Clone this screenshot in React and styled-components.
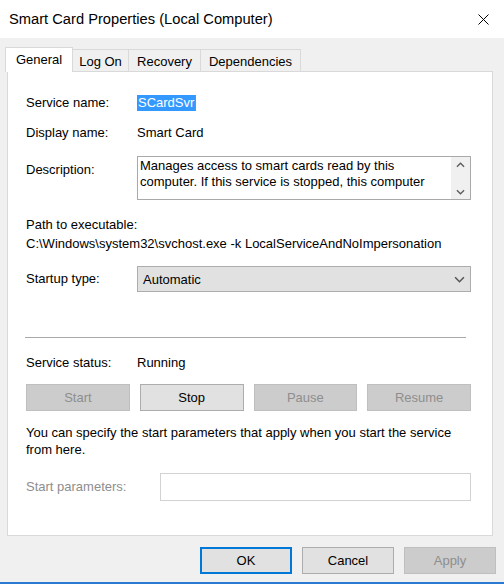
import React from "react"
import styled, { createGlobalStyle } from "styled-components"

const GlobalStyle = createGlobalStyle`
  html, body {
    margin: 0;
    padding: 0;
    background: #f0f0f0;
  }
  body {
    font-family: "Liberation Sans", Arial, sans-serif;
    font-size: 13px;
    color: #000;
  }
`

const Window = styled.div`
  width: 504px;
  height: 584px;
  box-sizing: border-box;
  display: flex;
  flex-direction: column;
  background: #f0f0f0;
  border-bottom: 2px solid #2a7ad2;
  overflow: hidden;
`

const TitleBar = styled.header`
  height: 38px;
  flex: none;
  display: flex;
  align-items: center;
  justify-content: space-between;
  background: #fff;
  padding-left: 9px;
`

const Title = styled.h1`
  margin: 0;
  font-size: 14.7px;
  font-weight: normal;
  line-height: 20px;
`

const CloseButton = styled.div`
  width: 42px;
  height: 38px;
  display: flex;
  align-items: center;
  justify-content: center;
`

const Body = styled.main`
  flex: 1;
  display: flex;
  flex-direction: column;
  padding: 9px 11px 0 7px;
`

const TabStrip = styled.nav`
  height: 24px;
  display: flex;
  align-items: flex-end;
  margin-left: -2px;
  position: relative;
  z-index: 1;
`

const Tab = styled.div`
  box-sizing: border-box;
  width: ${p => p.$width}px;
  height: ${p => (p.$active ? 25 : 22)}px;
  margin-bottom: ${p => (p.$active ? -1 : 0)}px;
  margin-left: ${p => (p.$first ? 0 : -1)}px;
  padding-top: 3px;
  border: 1px solid #d9d9d9;
  border-bottom: none;
  background: ${p => (p.$active ? "#fff" : "#f0f0f0")};
  position: relative;
  z-index: ${p => (p.$active ? 2 : 1)};
  text-align: center;
  line-height: 17px;
`

const Panel = styled.section`
  box-sizing: border-box;
  height: 465px;
  background: #fff;
  border: 1px solid #d9d9d9;
  padding: 22px 21px 0 18px;
  display: flex;
  flex-direction: column;
`

const Row = styled.div`
  display: flex;
  align-items: ${p => p.$align || "center"};
  margin-top: ${p => p.$top || 0}px;
`

const Label = styled.div`
  width: ${p => p.$width || 111}px;
  flex: none;
  line-height: 18px;
  padding-top: ${p => p.$pad || 0}px;
  color: ${p => (p.$disabled ? "#8e8e8e" : "#000")};
`

const Value = styled.div`
  line-height: 18px;
`

const Selected = styled.span`
  display: inline-block;
  line-height: 16px;
  padding: 0 1px;
  background: #3399ff;
  color: #fff;
  border-right: 1px solid #e07b00;
`

const TextBox = styled.div`
  box-sizing: border-box;
  width: 334px;
  height: 44px;
  border: 1px solid #a9a9a9;
  display: flex;
`

const TextLines = styled.div`
  flex: 1;
  padding: 1px 2px;
  line-height: 16px;
  white-space: nowrap;
`

const ScrollBar = styled.div`
  width: 19px;
  background: #f0f0f0;
  display: flex;
  flex-direction: column;
  justify-content: space-between;
  align-items: center;
  padding: 5px 0 4px;
`

const TextLine = styled.div``

const Plain = styled.div`
  line-height: 19px;
  white-space: nowrap;
  margin-top: ${p => p.$top || 0}px;
`

const Dropdown = styled.div`
  box-sizing: border-box;
  width: 335px;
  height: 26px;
  border: 1px solid #adadad;
  background: #e1e1e1;
  display: flex;
  align-items: center;
  justify-content: space-between;
  padding: 0 5px;
`

const Separator = styled.hr`
  margin: 45px 0 0 -1px;
  width: 441px;
  height: 1px;
  border: none;
  background: #a9a9a9;
`

const ButtonGrid = styled.div`
  display: grid;
  grid-template-columns: repeat(4, 1fr);
  gap: 10px;
  margin-top: 12px;
`

const Button = styled.button`
  box-sizing: border-box;
  height: 27px;
  width: ${p => (p.$width ? p.$width + "px" : "auto")};
  font-family: "Liberation Sans", Arial, sans-serif;
  font-size: 13px;
  padding: 0;
  border: ${p =>
    p.$default
      ? "2px solid #0078d7"
      : p.disabled
      ? "1px solid #bfbfbf"
      : "1px solid #adadad"};
  background: ${p => (p.disabled ? "#cccccc" : "#e1e1e1")};
  color: ${p => (p.disabled ? "#8e8e8e" : "#000")};
`

const Note = styled.p`
  margin: 13px 0 0;
  line-height: 17px;
  white-space: nowrap;
`

const Input = styled.div`
  box-sizing: border-box;
  width: 311px;
  height: 28px;
  border: 1px solid #d2d2d2;
  background: #fff;
`

const Footer = styled.footer`
  display: flex;
  justify-content: flex-end;
  gap: 10px;
  margin: 11px -3px 0 0;
`

const Chevron = ({ up, size = 9, color = "#5a5a5a" }) => (
  <svg width={size} height={Math.ceil(size / 2) + 1} viewBox="0 0 10 6">
    <polyline
      points={up ? "1,5 5,1 9,5" : "1,1 5,5 9,1"}
      fill="none"
      stroke={color}
      strokeWidth="1.4"
    />
  </svg>
)

const tabs = [
  { name: "General", width: 68 },
  { name: "Log On", width: 57 },
  { name: "Recovery", width: 73 },
  { name: "Dependencies", width: 101 },
]

const description = [
  "Manages access to smart cards read by this",
  "computer. If this service is stopped, this computer",
]

export default function App() {
  return (
    <>
      <GlobalStyle />
      <Window>
        <TitleBar>
          <Title>Smart Card Properties (Local Computer)</Title>
          <CloseButton>
            <svg width="11" height="11" viewBox="0 0 11 11">
              <path
                d="M0.5 0.5 L10.5 10.5 M10.5 0.5 L0.5 10.5"
                stroke="#000"
                strokeWidth="1"
              />
            </svg>
          </CloseButton>
        </TitleBar>
        <Body>
          <TabStrip>
            {tabs.map((t, i) => (
              <Tab
                key={t.name}
                $width={t.width}
                $active={i === 0}
                $first={i === 0}
              >
                {t.name}
              </Tab>
            ))}
          </TabStrip>
          <Panel>
            <Row>
              <Label>Service name:</Label>
              <Selected>SCardSvr</Selected>
            </Row>
            <Row $top={12}>
              <Label>Display name:</Label>
              <Value>Smart Card</Value>
            </Row>
            <Row $top={14} $align="flex-start">
              <Label $pad={5}>Description:</Label>
              <TextBox>
                <TextLines>
                  {description.map(line => (
                    <TextLine key={line}>{line}</TextLine>
                  ))}
                </TextLines>
                <ScrollBar>
                  <Chevron up />
                  <Chevron />
                </ScrollBar>
              </TextBox>
            </Row>
            <Plain $top={15}>Path to executable:</Plain>
            <Plain>
              C:\Windows\system32\svchost.exe -k LocalServiceAndNoImpersonation
            </Plain>
            <Row $top={13}>
              <Label>Startup type:</Label>
              <Dropdown>
                Automatic
                <Chevron size={11} color="#555" />
              </Dropdown>
            </Row>
            <Separator />
            <Row $top={16}>
              <Label>Service status:</Label>
              <Value>Running</Value>
            </Row>
            <ButtonGrid>
              <Button disabled>Start</Button>
              <Button>Stop</Button>
              <Button disabled>Pause</Button>
              <Button disabled>Resume</Button>
            </ButtonGrid>
            <Note>
              You can specify the start parameters that apply when you start the
              service
              <br />
              from here.
            </Note>
            <Row $top={15}>
              <Label $width={134} $disabled>
                Start parameters:
              </Label>
              <Input />
            </Row>
          </Panel>
          <Footer>
            <Button $width={92} $default>
              OK
            </Button>
            <Button $width={92}>Cancel</Button>
            <Button $width={92} disabled>
              Apply
            </Button>
          </Footer>
        </Body>
      </Window>
    </>
  )
}
